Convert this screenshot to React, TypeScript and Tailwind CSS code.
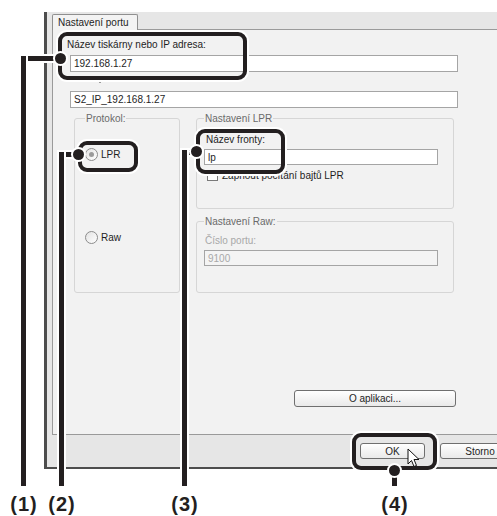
import type { ReactNode } from "react";

// Annotation ink used by the callout boxes, leader lines and numbers; each
// piece carries a thin white halo, as in the printed manual.
const INK = "bg-[#231f20] shadow-[0_0_0_2px_#fff]";

function Input({ value, width, disabled = false }: { value: string; width: string; disabled?: boolean }) {
  return (
    <div
      className={`${width} flex h-full items-center border border-[#a5a5a5] pl-[3px] ${
        disabled ? "bg-[#f4f4f4] text-[#a8a8a8]" : "bg-white text-[#1e1e1e]"
      }`}
    >
      {value}
    </div>
  );
}

function Radio({ checked }: { checked?: boolean }) {
  return (
    <span className="flex h-[13px] w-[13px] items-center justify-center rounded-full border border-[#8c8c8c] bg-gradient-to-br from-[#e2e2e2] to-white">
      {checked && <span className="h-[5px] w-[5px] rounded-full bg-[#9a9a9a]" />}
    </span>
  );
}

function Group({ title, className, children }: { title: string; className: string; children: ReactNode }) {
  return (
    <fieldset className={`rounded-[3px] border border-[#d6d6d6] ${className}`}>
      <legend className="px-[1px] leading-[13px] text-[#6a6a6a]">{title}</legend>
      {children}
    </fieldset>
  );
}

function Button({ label, className }: { label: string; className: string }) {
  return (
    <div
      className={`flex items-center justify-center rounded-[3px] border border-[#6f6f6f] bg-gradient-to-b from-white to-[#e9e9e9] text-[#1e1e1e] ${className}`}
    >
      {label}
    </div>
  );
}

function Callout({ box, dot, hLine, vLine }: {
  box: string;
  dot: string;
  hLine?: string;
  vLine: string;
}) {
  return (
    <>
      {hLine && <div className={`absolute h-[5px] ${INK} ${hLine}`} />}
      <div className={`absolute w-[5px] ${INK} ${vLine}`} />
      <div className={`absolute rounded-[9px] border-[4px] border-[#231f20] shadow-[0_0_0_2px_#fff] ${box}`} />
      <div className={`absolute h-[11px] w-[11px] rounded-full ${INK} ${dot}`} />
    </>
  );
}

function Cursor() {
  return (
    <svg className="absolute left-[407px] top-[448px]" width="13" height="20" viewBox="0 0 13 20">
      <path
        d="M1 1 L1 16 L4.5 12.5 L7 18.5 L9.5 17.5 L7 11.5 L12 11.5 Z"
        fill="#fff"
        stroke="#111"
        strokeWidth="1"
        strokeLinejoin="round"
      />
    </svg>
  );
}

export default function App() {
  return (
    <div className="relative h-[516px] w-[497px] overflow-hidden bg-white font-['Liberation_Sans',Arial,sans-serif] text-[10px] text-[#1e1e1e]">
      {/* Dialog window */}
      <div className="ml-[44px] mt-[12px] h-[457px] w-[480px] border-b-2 border-l-[3px] border-[#4d4d4d] bg-[#e6e6e6]">
        <div className="flex h-[17px] items-end pl-[5px]">
          <div className="relative z-10 -mb-px h-[16px] w-[86px] rounded-t-[2px] border border-b-0 border-[#8f8f8f] bg-[#f3f3f3] pl-[5px] leading-[15px]">
            Nastavení portu
          </div>
        </div>

        <div className="ml-[5px] h-[406px] w-[470px] border border-[#9a9a9a] bg-[#f2f2f2]">
          <div className="ml-[14px] mt-[8px] h-[13px] leading-[13px]">Název tiskárny nebo IP adresa:</div>
          <div className="ml-[17px] mt-[4px] h-[17px]">
            <Input value="192.168.1.27" width="w-[388px]" />
          </div>
          <div className="ml-[46px] mt-[3px] flex h-[13px] items-center">
            <span className="h-[2px] w-[2px] bg-[#9a9a9a]" />
          </div>
          <div className="ml-[17px] mt-[3px] h-[17px]">
            <Input value="S2_IP_192.168.1.27" width="w-[388px]" />
          </div>

          <div className="ml-[21px] mt-[4px] flex gap-[16px]">
            <Group title="Protokol:" className="h-[181px] w-[106px] px-[10px]">
              <div className="mt-[23px] flex h-[13px] items-center gap-[3px]">
                <Radio checked />
                <span>LPR</span>
              </div>
              <div className="mt-[70px] flex h-[13px] items-center gap-[3px]">
                <Radio />
                <span>Raw</span>
              </div>
            </Group>

            <div className="flex flex-col gap-[6px]">
              <Group title="Nastavení LPR" className="h-[97px] w-[258px] px-[7px]">
                <div className="ml-[2px] mt-[8px] h-[13px] leading-[13px]">Název fronty:</div>
                <div className="mt-[3px] h-[16px]">
                  <Input value="lp" width="w-[234px]" />
                </div>
                <div className="ml-[3px] mt-[4px] flex h-[13px] items-center gap-[4px]">
                  <span className="h-[11px] w-[11px] border border-[#7a7a7a] bg-white" />
                  <span>Zapnout počítání bajtů LPR</span>
                </div>
              </Group>

              <Group title="Nastavení Raw:" className="h-[78px] w-[258px] px-[7px]">
                <div className="ml-[1px] mt-[6px] h-[13px] leading-[13px] text-[#a8a8a8]">Číslo portu:</div>
                <div className="mt-[3px] h-[16px]">
                  <Input value="9100" width="w-[234px]" disabled />
                </div>
              </Group>
            </div>
          </div>

          <Button label="O aplikaci..." className="ml-[241px] mt-[97px] h-[17px] w-[162px]" />
        </div>

        <div className="ml-[313px] mt-[8px] flex gap-[15px]">
          <Button label="OK" className="h-[16px] w-[65px]" />
          <Button label="Storno" className="h-[16px] w-[80px]" />
        </div>
      </div>

      {/* Callouts laid over the screenshot */}
      <Callout
        box="left-[58px] top-[32px] h-[48px] w-[189px]"
        dot="left-[55px] top-[53px]"
        hLine="left-[21px] top-[56px] w-[38px]"
        vLine="left-[21px] top-[56px] h-[430px]"
      />
      <Callout
        box="left-[78px] top-[141px] h-[31px] w-[60px]"
        dot="left-[73px] top-[149px]"
        hLine="left-[59px] top-[152px] w-[18px]"
        vLine="left-[59px] top-[152px] h-[334px]"
      />
      <Callout
        box="left-[196px] top-[129px] h-[45px] w-[89px]"
        dot="left-[191px] top-[146px]"
        hLine="left-[182px] top-[150px] w-[14px]"
        vLine="left-[182px] top-[150px] h-[336px]"
      />
      <Callout
        box="left-[352px] top-[433px] h-[37px] w-[85px]"
        dot="left-[389px] top-[465px]"
        vLine="left-[392px] top-[468px] h-[18px]"
      />
      <Cursor />

      {[
        { label: "(1)", pos: "left-[4px]" },
        { label: "(2)", pos: "left-[42px]" },
        { label: "(3)", pos: "left-[165px]" },
        { label: "(4)", pos: "left-[375px]" },
      ].map((n) => (
        <span
          key={n.label}
          className={`absolute top-[494px] w-[40px] text-center text-[20px] font-bold leading-[20px] tracking-[1px] text-[#231f20] ${n.pos}`}
        >
          {n.label}
        </span>
      ))}
    </div>
  );
}
